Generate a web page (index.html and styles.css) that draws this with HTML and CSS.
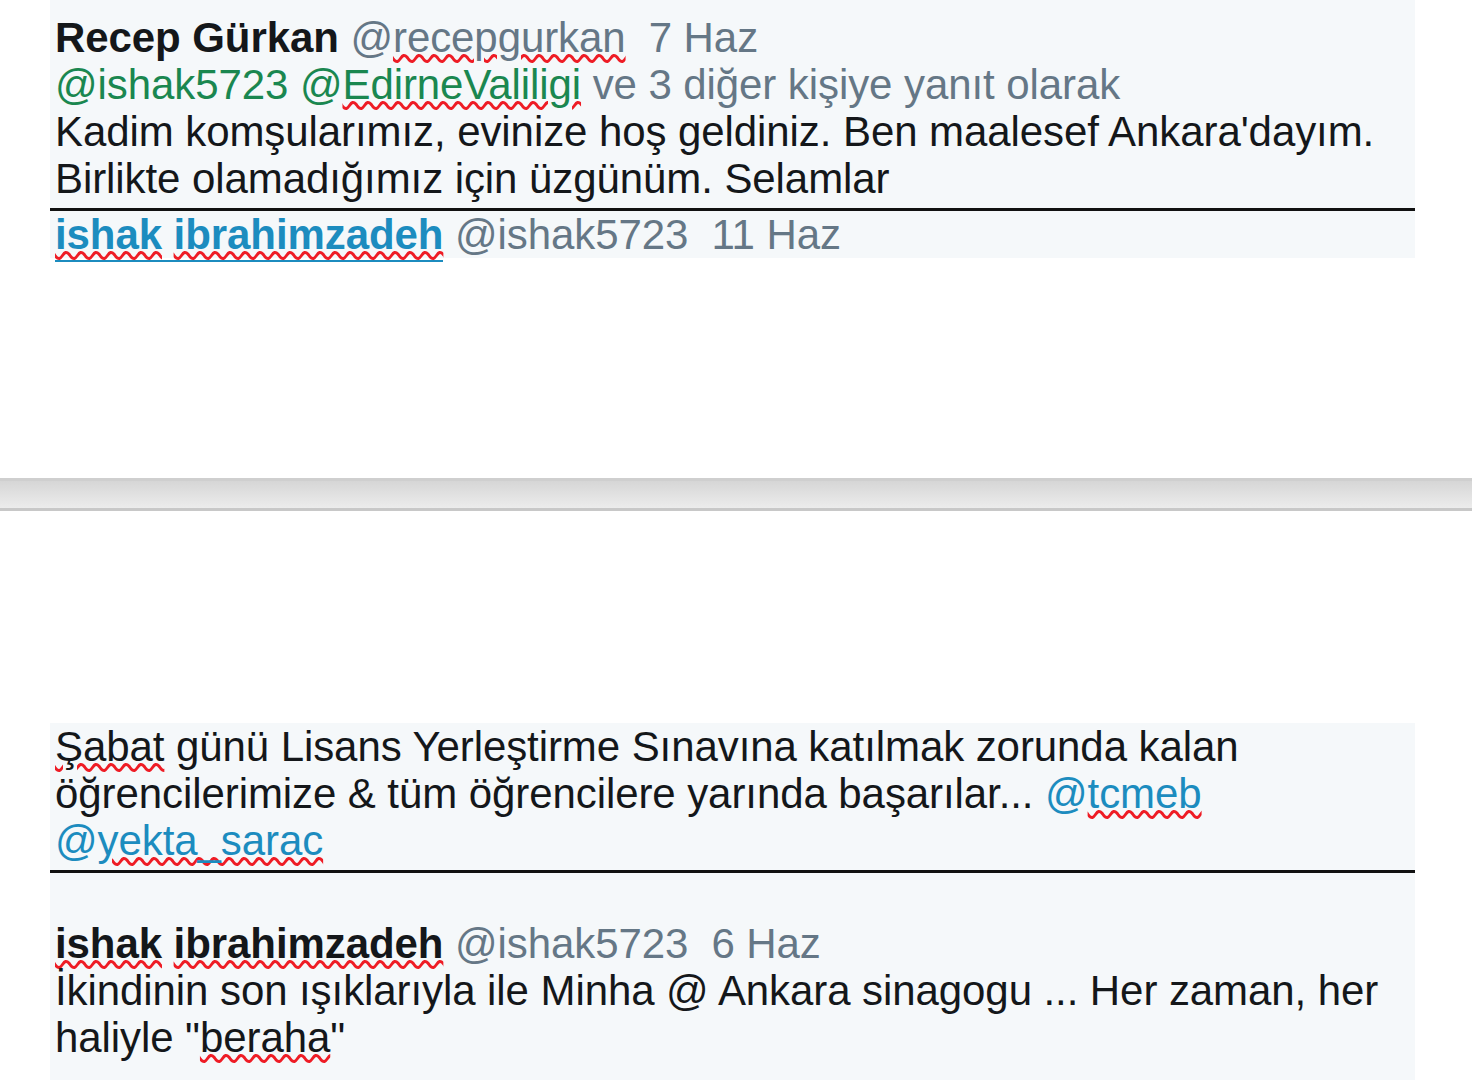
FILE: index.html
```html
<!DOCTYPE html>
<html lang="tr">
    <head>
        <meta charset="UTF-8">
        <meta name="viewport" content="width=device-width, initial-scale=1.0">
        <title>Tweetler</title>
        <link rel="stylesheet" href="styles.css">
    </head>
    <body>
        <!-- Page 1 -->
        <div class="page page-top">
            <div class="sheet">
                <div class="tweet">
                    <div class="line">
                        <span class="name">Recep Gürkan</span>
                        <span class="muted">@<span class="typo">recepgurkan</span>&nbsp; 7 Haz</span>
                    </div>
                    <div class="line">
                        <span class="mention">@ishak5723 @<span class="typo">EdirneValiligi</span></span>
                        <span class="muted">ve 3 diğer kişiye yanıt olarak</span>
                    </div>
                    <div class="line">Kadim komşularımız, evinize hoş geldiniz. Ben maalesef Ankara'dayım.</div>
                    <div class="line">Birlikte olamadığımız için üzgünüm. Selamlar</div>
                </div>

                <div class="rule"></div>

                <div class="line">
                    <span class="name name-link"><span class="typo">ishak</span> <span class="typo">ibrahimzadeh</span></span>
                    <span class="muted">@ishak5723&nbsp; 11 Haz</span>
                </div>
            </div>
        </div>

        <!-- Page break -->
        <div class="page-break"></div>

        <!-- Page 2 -->
        <div class="page page-bottom">
            <div class="sheet">
                <div class="tweet">
                    <div class="line"><span class="typo">Şabat</span> günü Lisans Yerleştirme Sınavına katılmak zorunda kalan</div>
                    <div class="line">öğrencilerimize &amp; tüm öğrencilere yarında başarılar... <span class="link">@<span class="typo">tcmeb</span></span></div>
                    <div class="line"><span class="link">@<span class="typo">yekta_sarac</span></span></div>
                </div>

                <div class="rule"></div>
                <div class="line blank"></div>

                <div class="tweet tweet-last">
                    <div class="line">
                        <span class="name"><span class="typo">ishak</span> <span class="typo">ibrahimzadeh</span></span>
                        <span class="muted">@ishak5723&nbsp; 6 Haz</span>
                    </div>
                    <div class="line">İkindinin son ışıklarıyla ile Minha @ Ankara sinagogu ... Her zaman, her</div>
                    <div class="line">haliyle "<span class="typo">beraha</span>"</div>
                </div>
            </div>
        </div>
    </body>
</html>
```

FILE: styles.css
```css
body {
    margin: 0;
    background-color: #ffffff;
    font-family: "Liberation Sans", Arial, sans-serif;
    color: #14171a;
}

.page-top {
    height: 478px;
}

.page-bottom {
    padding-top: 212px;
}

.sheet {
    margin-left: 50px;
    width: 1365px;
    background-color: #f5f8fa;
}

.page-top .sheet {
    padding-top: 14px;
}

.line {
    font-size: 42px;
    line-height: 47px;
    height: 47px;
    padding-left: 5px;
    white-space: nowrap;
    letter-spacing: -0.08px;
}

.tweet {
    padding-bottom: 6px;
}

.tweet-last {
    padding-bottom: 30px;
}

.rule {
    height: 3px;
    background-color: #111111;
}

.name {
    font-weight: bold;
}

.name-link {
    color: #1c8cbf;
    border-bottom: 2px solid #1c8cbf;
    padding-bottom: 2px;
}

.muted {
    color: #657786;
}

.mention {
    color: #1a8750;
}

.link {
    color: #1c8cbf;
}

.typo {
    text-decoration: underline wavy #ee1c25;
    text-decoration-thickness: 2.5px;
    text-underline-offset: 2px;
}

.page-break {
    height: 27px;
    border-top: 3px solid #cfcfcf;
    border-bottom: 3px solid #c8c8c8;
    background: linear-gradient(#d6d6d6, #ececec);
}
```
